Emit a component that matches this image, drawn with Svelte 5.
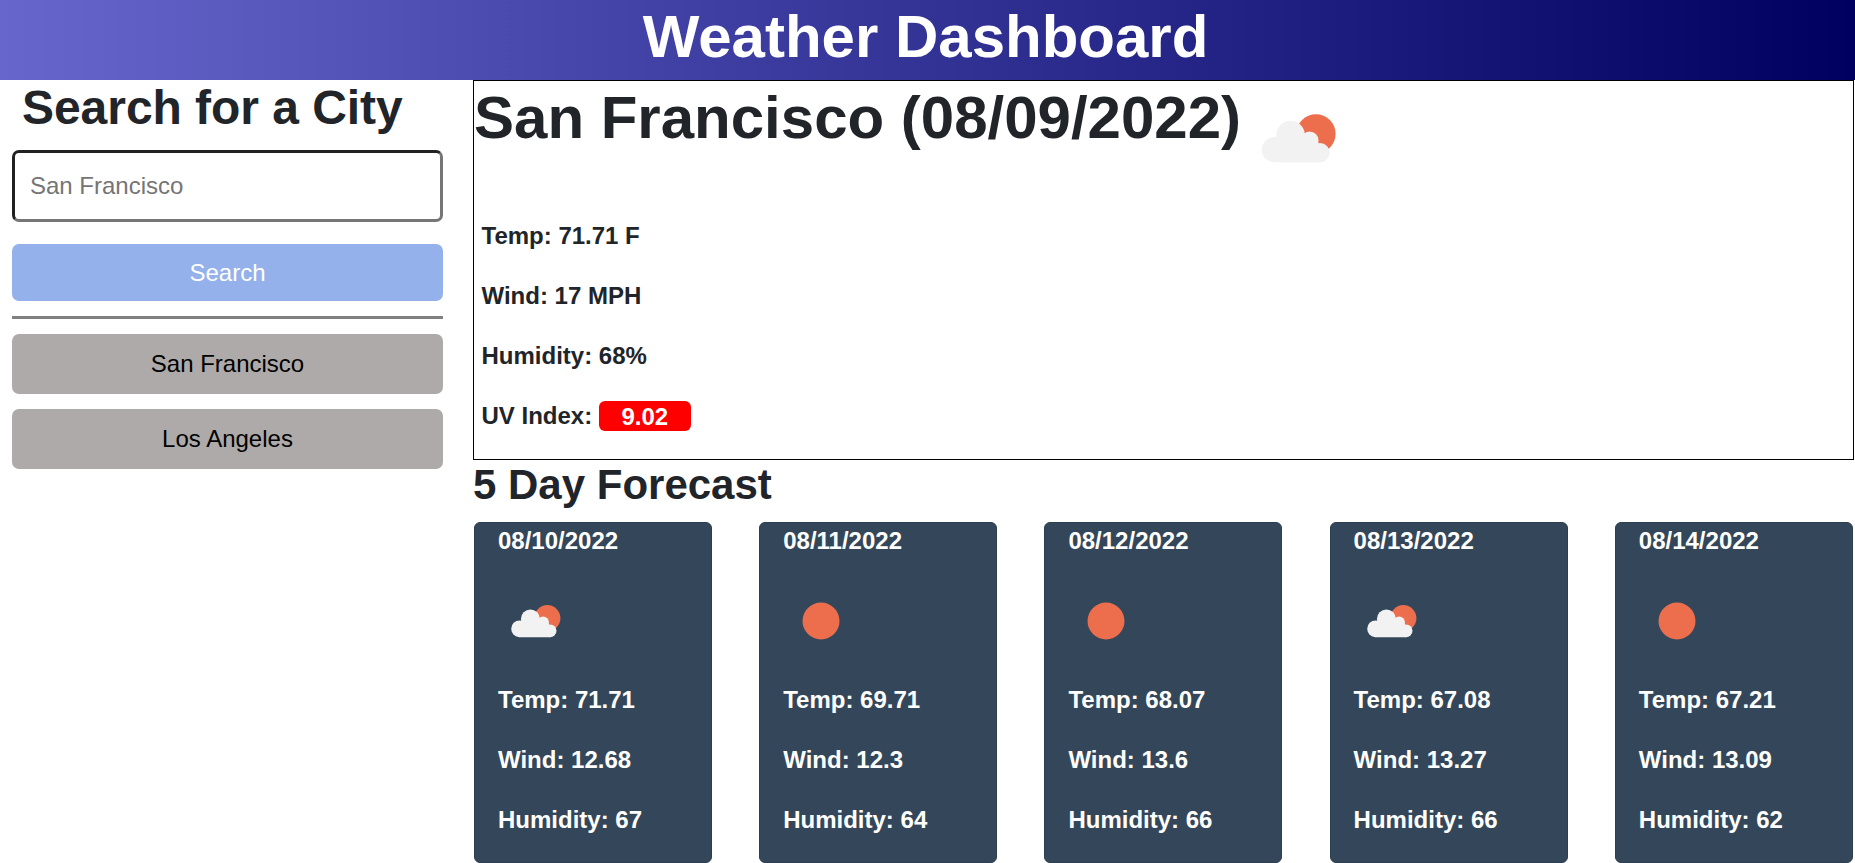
<script>
  const history = ['San Francisco', 'Los Angeles'];
  const days = [
    { date: '08/10/2022', icon: 'cloudy', temp: '71.71', wind: '12.68', humidity: '67' },
    { date: '08/11/2022', icon: 'clear', temp: '69.71', wind: '12.3', humidity: '64' },
    { date: '08/12/2022', icon: 'clear', temp: '68.07', wind: '13.6', humidity: '66' },
    { date: '08/13/2022', icon: 'cloudy', temp: '67.08', wind: '13.27', humidity: '66' },
    { date: '08/14/2022', icon: 'clear', temp: '67.21', wind: '13.09', humidity: '62' }
  ];
</script>

{#snippet weatherIcon(kind, size)}
  <svg class="icon" width={size} height={size} viewBox="0 0 100 100" aria-hidden="true">
    {#if kind === 'cloudy'}
      <circle cx="61.3" cy="47.2" r="13.1" fill="#ec6e4c" />
      <g fill="#f2f2f2">
        <circle cx="33.6" cy="57.8" r="8.4" />
        <circle cx="44.4" cy="48" r="9.5" />
        <circle cx="57.1" cy="51.5" r="5.9" />
        <circle cx="64.1" cy="59.8" r="6.4" />
        <path d="M33.6 50h22L63 53l1.1 13.2H33.6z" />
      </g>
    {:else}
      <circle cx="50" cy="50" r="18.5" fill="#ec6e4c" />
    {/if}
  </svg>
{/snippet}

<header><h1>Weather Dashboard</h1></header>
<main>
  <aside>
    <h2>Search for a City</h2>
    <input type="text" placeholder="San Francisco" />
    <button class="search">Search</button>
    <hr />
    {#each history as city}
      <button class="city">{city}</button>
    {/each}
  </aside>
  <section>
    <div class="current">
      <div class="title">
        <h2>San Francisco (08/09/2022)</h2>
        {@render weatherIcon('cloudy', 150)}
      </div>
      <p>Temp: 71.71 F</p>
      <p>Wind: 17 MPH</p>
      <p>Humidity: 68%</p>
      <p>UV Index: <span class="uv">9.02</span></p>
    </div>
    <h3>5 Day Forecast</h3>
    <div class="cards">
      {#each days as day}
        <article>
          <h4>{day.date}</h4>
          {@render weatherIcon(day.icon, 100)}
          <p>Temp: {day.temp}</p>
          <p>Wind: {day.wind}</p>
          <p>Humidity: {day.humidity}</p>
        </article>
      {/each}
    </div>
  </section>
</main>

<style>
  :global(body) {
    margin: 0;
    overflow: hidden;
    background: #fff;
    color: #212529;
    font: 24px/36px "Liberation Sans", Arial, sans-serif;
  }
  *, *::before { box-sizing: border-box; }
  h1, h2, h3, h4, p { margin: 0; font-weight: 700; }
  header {
    height: 80px;
    background: linear-gradient(to right, #6666cc, #000060);
    color: #fff;
    text-align: center;
  }
  h1 { font-size: 60px; line-height: 74px; padding-right: 4px; }
  main { display: flex; }
  aside {
    display: flex;
    flex-direction: column;
    width: 473px;
    padding: 0 30px 0 12px;
  }
  aside h2 { height: 70px; padding-left: 10px; font-size: 48px; line-height: 56px; letter-spacing: -0.05px; }
  input {
    height: 72px;
    margin-bottom: 22px;
    padding: 0 15px;
    border: 3px solid;
    border-color: #212121 #767676 #767676 #212121;
    border-radius: 7px;
    font: inherit;
    background: #fff;
  }
  input::placeholder { color: #757575; opacity: 1; }
  button { border: 0; border-radius: 7px; padding: 0; font: inherit; }
  .search { height: 57px; background: #94b1eb; color: #fff; }
  hr { width: 100%; height: 3px; margin: 15px 0; border: 0; background: #808080; }
  .city { height: 60px; margin-bottom: 15px; background: #aeaaa9; color: #000; }
  section { width: 1381px; }
  .current { height: 380px; border: 1px solid #000; overflow: hidden; }
  .title { display: flex; height: 136px; }
  .title h2 { font-size: 60px; line-height: 74px; white-space: pre; }
  .title .icon { margin: -18px 0 0 -17.5px; }
  .icon { display: block; flex: none; }
  .current p { height: 60px; padding-left: 7.5px; line-height: 38px; }
  .uv {
    display: inline-block;
    width: 92px;
    height: 30px;
    border-radius: 6px;
    background: red;
    color: #fff;
    line-height: 32px;
    text-align: center;
    transform: translateY(1px);
  }
  h3 { height: 62px; font-size: 42px; line-height: 50px; }
  .cards { display: flex; justify-content: space-between; padding: 0 1.15px 0 1px; }
  article {
    width: 238px;
    height: 341px;
    padding: 0 0 0 23px;
    border: 1px solid #2c3f50;
    border-radius: 6px;
    background: #34475a;
    color: #fff;
  }
  h4 { height: 48px; font-size: 24px; line-height: 36px; }
  article p { height: 60px; line-height: 36px; }
  article .icon { margin: 0 0 11px -12px; }
</style>
